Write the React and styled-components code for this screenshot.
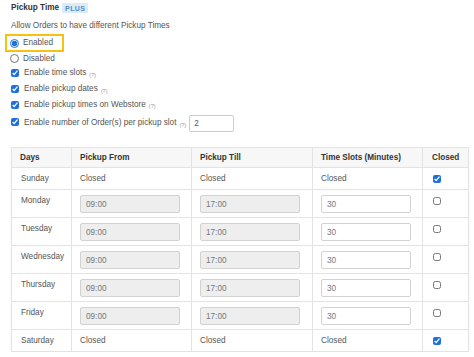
import React from 'react'
import styled, { createGlobalStyle } from 'styled-components'

const GlobalStyle = createGlobalStyle`
  body {
    margin: 0;
    background: #fff;
    font-family: "Liberation Sans", Arial, sans-serif;
    font-size: 8.2px;
    color: #555;
  }
`

const days = [
  { name: 'Sunday', closed: true },
  { name: 'Monday' },
  { name: 'Tuesday' },
  { name: 'Wednesday' },
  { name: 'Thursday' },
  { name: 'Friday' },
  { name: 'Saturday', closed: true },
]

const options = [
  'Enable time slots',
  'Enable pickup dates',
  'Enable pickup times on Webstore',
]

const App = () => {
  return (
    <>
      <GlobalStyle />
      <Page>
        <TitleRow>
          <Title>Pickup Time</Title>
          <Badge>PLUS</Badge>
        </TitleRow>

        <Intro>Allow Orders to have different Pickup Times</Intro>

        <Highlight>
          <Radio type="radio" name="pickup" defaultChecked />
          <span>Enabled</span>
        </Highlight>
        <OptionRow $h={13}>
          <Radio type="radio" name="pickup" />
          <span>Disabled</span>
        </OptionRow>

        {options.map((o, i) => (
          <OptionRow key={o} $h={i === 2 ? 15 : 16}>
            <Check type="checkbox" defaultChecked />
            <span>{o}</span>
            <Help>(?)</Help>
          </OptionRow>
        ))}

        <NumberRow>
          <Check type="checkbox" defaultChecked />
          <span>Enable number of Order(s) per pickup slot</span>
          <Help>(?)</Help>
          <SmallInput defaultValue="2" />
        </NumberRow>

        <Table>
          <colgroup>
            <col style={{ width: 60 }} />
            <col style={{ width: 120 }} />
            <col style={{ width: 121 }} />
            <col style={{ width: 110 }} />
            <col style={{ width: 46 }} />
          </colgroup>
          <thead>
            <tr>
              <Th>Days</Th>
              <Th>Pickup From</Th>
              <Th>Pickup Till</Th>
              <Th>Time Slots (Minutes)</Th>
              <Th $pl={9}>Closed</Th>
            </tr>
          </thead>
          <tbody>
            {days.map((d) => (
              <tr key={d.name}>
                <Td $pl={9}>{d.name}</Td>
                {d.closed ? (
                  <>
                    <Td>Closed</Td>
                    <Td>Closed</Td>
                    <Td>Closed</Td>
                  </>
                ) : (
                  <>
                    <Td><TimeInput value="09:00" disabled readOnly /></Td>
                    <Td><TimeInput value="17:00" disabled readOnly /></Td>
                    <Td><TimeInput defaultValue="30" $w={90} /></Td>
                  </>
                )}
                <Td $pl={10}>
                  <CellCheck type="checkbox" defaultChecked={!!d.closed} />
                </Td>
              </tr>
            ))}
          </tbody>
        </Table>
      </Page>
    </>
  )
}

export default App

const Page = styled.div`
  padding: 3px 6px 0 11px;
  width: 457px;
`

const TitleRow = styled.div`
  display: flex;
  align-items: center;
  gap: 3px;
  height: 10px;
`

const Title = styled.span`
  font-weight: bold;
  color: #333;
  line-height: 10px;
`

const Badge = styled.span`
  display: inline-flex;
  align-items: center;
  height: 10px;
  padding: 0 3px;
  background: #dcebf7;
  color: #4f8fc6;
  font-size: 7px;
  font-weight: bold;
  letter-spacing: 0.4px;
  border-radius: 1px;
`

const Intro = styled.div`
  margin-top: 8px;
  line-height: 10px;
`

const Highlight = styled.label`
  display: flex;
  align-items: center;
  gap: 4px;
  width: 51px;
  height: 14px;
  margin: 3px 0 0 -6px;
  padding-left: 4px;
  border: 2px solid #f5c30f;
  line-height: 10px;
`

const OptionRow = styled.label`
  display: flex;
  align-items: center;
  gap: 4px;
  height: ${(p) => p.$h}px;
  line-height: 10px;
`

const NumberRow = styled.label`
  display: flex;
  align-items: flex-start;
  gap: 4px;
  margin-top: 3px;
  line-height: 10px;

  & > span:first-of-type,
  & > input[type='checkbox'] {
    margin-top: 3px;
  }
`

const Radio = styled.input`
  width: 9px;
  height: 9px;
  margin: 0 0 0 -1px;
  accent-color: #1e6fd9;
`

const Check = styled.input`
  width: 8px;
  height: 8px;
  margin: 0 1px 0 0;
  accent-color: #1e6fd9;
`

const Help = styled.span`
  font-size: 5.5px;
  color: #999;
  margin-left: -1px;
  margin-top: 3px;
  align-self: center;
`

const SmallInput = styled.input`
  box-sizing: border-box;
  width: 45px;
  height: 17px;
  margin-left: -1px;
  padding: 0 4px;
  border: 1px solid #ccc;
  border-radius: 2px;
  font-family: "Liberation Sans", Arial, sans-serif;
  font-size: 8.2px;
  color: #555;
  outline: none;
`

const Table = styled.table`
  margin-top: 15px;
  width: 457px;
  table-layout: fixed;
  border-collapse: collapse;
  border: 1px solid #e3e3e3;
  box-shadow: 0 1px 2px rgba(0, 0, 0, 0.06);
`

const Th = styled.th`
  height: 19px;
  padding: 0 0 0 ${(p) => p.$pl || 8}px;
  text-align: left;
  font-weight: bold;
  color: #333;
  background: #f7f7f7;
  border: 1px solid #e3e3e3;
  line-height: 10px;
`

const Td = styled.td`
  padding: 5px 0 4px ${(p) => p.$pl || 8}px;
  vertical-align: top;
  line-height: 12px;
  border: 1px solid #e3e3e3;
  color: #555;
`

const TimeInput = styled.input`
  display: block;
  box-sizing: border-box;
  width: ${(p) => p.$w || 100}px;
  height: 18px;
  margin: 0;
  padding: 0 5px;
  border: 1px solid #d2d2d2;
  border-radius: 2px;
  background: ${(p) => (p.disabled ? '#eeeeee' : '#fff')};
  font-family: "Liberation Sans", Arial, sans-serif;
  font-size: 8.2px;
  color: #777;
  outline: none;
`

const CellCheck = styled.input`
  display: block;
  width: 8px;
  height: 8px;
  margin: 2px 0 0 0;
  accent-color: #1e6fd9;
`
